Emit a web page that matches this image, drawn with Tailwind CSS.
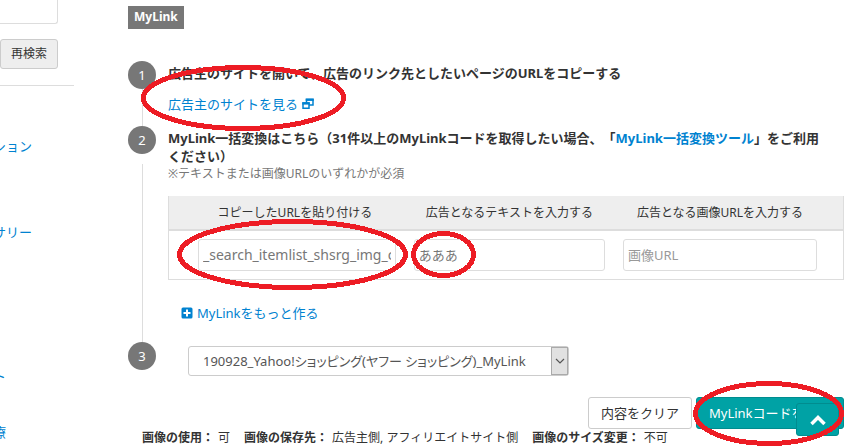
<!DOCTYPE html>
<html lang="ja">
<head>
<meta charset="utf-8">
<meta name="viewport" content="width=device-width, initial-scale=1">
<title>MyLink</title>
<script src="https://cdn.jsdelivr.net/npm/@tailwindcss/browser@4"></script>
</head>
<body class="relative flex h-screen overflow-hidden bg-white font-['Noto_Sans','Noto_Sans_CJK_JP',sans-serif] text-[13px] leading-[18px] text-[#333] [text-spacing-trim:space-all]">

<aside class="flex w-[74px] shrink-0 flex-col overflow-hidden">
  <form class="flex flex-col items-start gap-[15px] border-b border-[#ddd] pb-4" onsubmit="return false">
    <input type="text" aria-label="キーワード" class="h-6 w-[58px] rounded-br-[3px] border-r border-b border-[#ddd] outline-none">
    <button type="submit" class="h-[30px] w-[58px] rounded-[3px] border border-[#ccc] bg-[#eee] text-[12px]">再検索</button>
  </form>
  <nav class="flex flex-col items-start text-[#0082d0]">
    <a href="#" class="mt-[51px] flex w-8 justify-end whitespace-nowrap">ション</a>
    <a href="#" class="mt-[68px] flex w-8 justify-end whitespace-nowrap">サリー</a>
    <a href="#" class="mt-[126px] flex w-[6px] justify-end whitespace-nowrap">ト</a>
    <a href="#" class="mt-[38px] flex w-[6px] justify-end whitespace-nowrap">療</a>
  </nav>
</aside>

<main class="min-w-0 flex-1 pt-[6px] pr-[9px] pl-[54px]">
  <h2 class="inline-block h-[23px] bg-[#777] px-[6px] text-[12px] leading-[22px] font-bold text-white align-top">MyLink</h2>

  <ol class="mt-8">
    <li class="flex gap-3">
      <div class="flex w-7 shrink-0 flex-col items-center">
        <span class="flex size-7 items-center justify-center rounded-full bg-[#777] text-white">1</span>
        <span class="w-px flex-1 bg-[#ddd]"></span>
      </div>
      <div class="min-w-0 flex-1 pt-[3px] pb-[13px]">
        <p class="font-bold">広告主のサイトを開いて、広告のリンク先としたいページのURLをコピーする</p>
        <p class="mt-[13px]"><a href="#" class="inline-flex items-center gap-1 text-[#0082d0]">広告主のサイトを見る
          <svg class="size-3" viewBox="0 0 12 12" fill="none" stroke="currentColor" aria-hidden="true"><path d="M4.500 1.500h6.500v5.500H4.500z" stroke-width="1.500"/><path d="M3.700 1.700h8" stroke-width="2.400"/><path d="M1 5h6v5.200H1z" fill="#fff" stroke-width="1.500"/><path d="M.3 5.400h7.400" stroke-width="2.400"/></svg></a></p>
      </div>
    </li>

    <li class="flex gap-3">
      <div class="flex w-7 shrink-0 flex-col items-center">
        <span class="flex size-7 items-center justify-center rounded-full bg-[#777] text-white">2</span>
        <span class="mt-[10px] w-px flex-1 bg-[#ddd]"></span>
      </div>
      <div class="min-w-0 flex-1 pt-[3px] pb-[19px]">
        <p class="pr-4 font-bold">MyLink一括変換はこちら（31件以上のMyLinkコードを取得したい場合、「<a href="#" class="text-[#0082d0]">MyLink一括変換ツール</a>」をご利用ください）</p>
        <p class="text-[12px] text-[#777]">※テキストまたは画像URLのいずれかが必須</p>
        <table class="mt-[13px] w-full table-fixed border-collapse border border-t-0 border-[#ddd]">
          <thead class="border-b-2 border-[#ddd] bg-[#eee]">
            <tr class="h-[34px] text-[12px]">
              <th class="w-[35%] pr-[9px] pl-[25px] font-normal"><label for="url">コピーしたURLを貼り付ける</label></th>
              <th class="w-[31%] px-[9px] font-normal"><label for="txt">広告となるテキストを入力する</label></th>
              <th class="pr-[26px] pl-[9px] font-normal"><label for="img">広告となる画像URLを入力する</label></th>
            </tr>
          </thead>
          <tbody>
            <tr class="h-[49px]">
              <td class="pr-[9px] pl-[29px]"><input id="url" type="text" value="_search_itemlist_shsrg_img_c" class="block h-8 w-full rounded-[3px] border border-[#ddd] px-1 text-[14px] text-[#777] outline-none"></td>
              <td class="px-[9px]"><input id="txt" type="text" value="あああ" class="block h-8 w-full rounded-[3px] border border-[#ddd] px-1 text-[#777] outline-none"></td>
              <td class="pr-[26px] pl-[9px]"><input id="img" type="text" placeholder="画像URL" class="block h-8 w-full rounded-[3px] border border-[#ddd] px-1 outline-none placeholder:text-[#999]"></td>
            </tr>
          </tbody>
        </table>
        <p class="mt-6 pl-[13px]"><a href="#" class="inline-flex items-center gap-1 text-[#0082d0]">
          <svg class="size-3" viewBox="0 0 12 12" aria-hidden="true"><rect x=".5" y=".5" width="11" height="11" rx="1.500" fill="currentColor"/><path d="M6 2.500v7M2.500 6h7" stroke="#fff" stroke-width="2"/></svg>MyLinkをもっと作る</a></p>
      </div>
    </li>

    <li class="flex gap-8">
      <span class="flex size-7 shrink-0 items-center justify-center rounded-full bg-[#777] text-white">3</span>
      <div class="relative mt-1 w-[381px]">
        <select aria-label="MyLink" class="block h-[30px] w-full appearance-none rounded-[3px] border border-[#ccc] bg-white pr-5 pl-[14px] text-[#555] [font-feature-settings:'palt']"><option>190928_Yahoo!ショッピング(ヤフー ショッピング)_MyLink</option></select>
        <span class="pointer-events-none absolute inset-y-px right-px flex w-[17px] items-center justify-center border border-[#aaa] bg-[#e1e1e1]">
          <svg class="h-[6px] w-[10px]" viewBox="0 0 10 6" fill="none" stroke="#555" stroke-width="1.200" aria-hidden="true"><path d="m1 1 4 4 4-4"/></svg>
        </span>
      </div>
    </li>
  </ol>

  <div class="mt-[21px] flex justify-end gap-1">
    <button type="button" class="h-8 rounded-[3px] border border-[#ccc] bg-white px-3 whitespace-nowrap">内容をクリア</button>
    <button type="button" class="h-8 w-[148px] rounded-[3px] border border-[#008c8f] bg-[#00a2a5] pl-3 text-left whitespace-nowrap text-white">MyLinkコードを取得</button>
  </div>
  <dl class="flex pl-[14px] text-[12px] leading-[18px] whitespace-nowrap">
    <dt class="font-bold">画像の使用：</dt><dd class="mr-[14px] ml-1">可</dd>
    <dt class="font-bold">画像の保存先：</dt><dd class="mr-[14px] ml-1">広告主側, アフィリエイトサイト側</dd>
    <dt class="font-bold">画像のサイズ変更：</dt><dd class="ml-1">不可</dd>
  </dl>
</main>

<a href="#" aria-label="ページの先頭へ" class="absolute right-[14px] bottom-[11px] flex h-[33px] w-[43px] items-center justify-center rounded-[3px] border border-[#008c8f] bg-[#00a2a5] text-white">
  <svg class="mt-[2px] h-[11px] w-4" viewBox="0 0 16 11" fill="none" stroke="currentColor" stroke-width="3.500" aria-hidden="true"><path d="m1.500 9 6.500-6.500L14.500 9"/></svg>
</a>

<svg class="pointer-events-none absolute top-0 left-0 h-[447px] w-[853px]" viewBox="0 0 853 447" fill="none" stroke="#ed1c24" stroke-width="5" shape-rendering="crispEdges" aria-hidden="true">
  <ellipse cx="243.500" cy="98" rx="100" ry="30.500"/>
  <ellipse cx="292.500" cy="254.500" rx="113" ry="33"/>
  <ellipse cx="443.500" cy="254.500" rx="30" ry="21"/>
  <ellipse cx="768.500" cy="413.500" rx="73" ry="30"/>
</svg>
</body>
</html>
